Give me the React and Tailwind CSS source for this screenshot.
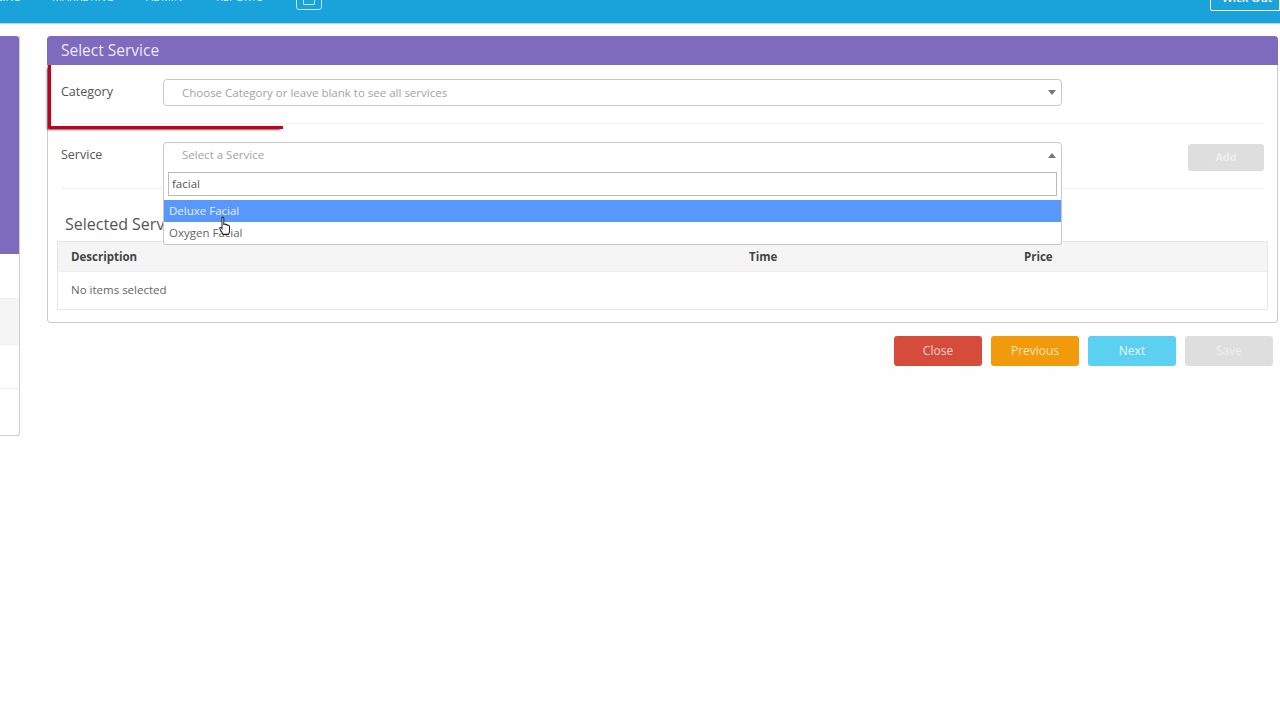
function Arrow({ up }) {
    return (
        <span className={`w-0 h-0 border-x-[4px] border-x-transparent ${up ? "border-b-[5px] border-b-[#777]" : "border-t-[5px] border-t-[#777]"}`}></span>
    )
}

function Select({ text, up, children }) {
    return (
        <div className={`relative h-[27px] w-[899px] border border-[#c8c8c8] bg-white flex items-center justify-between pl-[18px] pr-[5px] ${up ? "rounded-t-[4px]" : "rounded-[4px]"}`}>
            <span className={`text-[11.5px] text-[#a3a3a3] ${up ? "-mt-[1px]" : ""}`}>{text}</span>
            <Arrow up={up} />
            {children}
        </div>
    )
}

function Button({ label, className }) {
    return (
        <button className={`w-[88px] h-[30px] rounded-[3px] text-[12px] font-medium text-center ${className}`}>{label}</button>
    )
}

function Cursor() {
    return (
        <svg className="absolute left-[55px] top-[16px] z-20" width="12" height="20" viewBox="0 0 12 18" preserveAspectRatio="none">
            <path d="M3 1.500c.8-.8 1.800-.4 1.800.6v5.400l.6-.1c.9-.2 1.500.1 1.600.5.8-.3 1.400 0 1.600.5.9-.3 1.900.1 1.900 1.100v4c0 1.300-.4 2.200-1 3H4c-.5-1.300-2.300-3.200-3.200-5-.4-.9.5-1.500 1.200-1l1 1V2.500z" fill="#fff" stroke="#222" strokeWidth="1" />
        </svg>
    )
}

function ServiceDropdown() {
    return (
        <div className="absolute left-[-1px] top-[25px] w-[899px] h-[77px] bg-white border border-[#c8c8c8] border-t-0 rounded-b-[3px] text-[11.5px] z-10">
            <div className="p-[4px]">
                <div className="h-[24px] border border-[#bbb] pl-[3px] flex items-center text-[11.5px] text-[#555]">facial</div>
            </div>
            <div className="relative h-[22px] bg-[#5897fb] text-[#e9f1fe] pl-[5px] flex items-center">
                Deluxe Facial
                <Cursor />
            </div>
            <div className="h-[22px] text-[#666] pl-[5px] flex items-center">Oxygen Facial</div>
        </div>
    )
}

export default function App() {
    return (
        <div className="h-[720px] overflow-hidden bg-[#fefefe] flex flex-col" style={{ fontFamily: '"Open Sans", sans-serif' }}>
            <div className="h-[24px] shrink-0 overflow-hidden bg-[#1aa3db] border-b border-[#a8dcf2] flex justify-between text-white">
                <div className="flex -mt-[11px] text-[11px] font-medium text-[#d5eef8]">
                    <span className="w-[74px] -ml-[22px] pr-[32px] text-right">ONLINE</span>
                    <span className="w-[94px]">MARKETING</span>
                    <span className="w-[70px]">ADMIN</span>
                    <span className="w-[80px]">REPORTS</span>
                    <span className="mt-[1px] w-[26px] h-[20px] border border-[#bfe6f6] rounded-[3px] flex justify-center items-end pb-[4px]">
                        <span className="w-[12px] h-[9px] border border-[#bfe6f6] rounded-[1px]"></span>
                    </span>
                </div>
                <div className="-mt-[10px] w-[70px] h-[21px] border border-white rounded-l-[2px] pl-[11px] pt-[1px] text-[11.5px] leading-[12px] font-semibold">Wick Out</div>
            </div>

            <div className="flex mt-[12px] gap-[27px]">
                <div className="w-[20px] h-[400px] shrink-0 bg-white border-r border-b border-[#cfcfcf] rounded-br-[3px] flex flex-col">
                    <div className="h-[218px] bg-[#7f6bbd] rounded-tr-[3px]"></div>
                    <div className="h-[45px] border-b border-[#eee]"></div>
                    <div className="h-[46px] bg-[#f5f5f5] border-b border-[#eee]"></div>
                    <div className="h-[44px] border-b border-[#eee]"></div>
                </div>

                <div className="w-[1231px] shrink-0">
                    <div className="relative border border-[#cccccc] border-t-0 rounded-[4px] bg-white h-[287px]">
                        <div className="-mx-px h-[29px] bg-[#7f6bbd] rounded-t-[4px] pl-[14px] flex items-center text-[15.5px] font-medium text-[#ece8f6]">Select Service</div>

                        {/* red annotation drawn over the screenshot */}
                        <div className="absolute left-0 top-[29px] w-[235px] h-[64px] border-l-[3px] border-b-[3px] border-[#c4001c] shadow-[-2px_2px_2px_-1px_rgba(0,0,0,0.6)] rounded-bl-[2px]"></div>

                        <div className="mx-[13px] pt-[14px] h-[59px] border-b border-[#f0f0f0] flex">
                            <div className="w-[102px] text-[12.5px] text-[#555] mt-[4px]">Category</div>
                            <Select text="Choose Category or leave blank to see all services" />
                        </div>

                        <div className="mx-[13px] pt-[18px] h-[65px] border-b border-[#f0f0f0] flex">
                            <div className="w-[102px] text-[12.5px] text-[#555] mt-[4px]">Service</div>
                            <Select text="Select a Service" up>
                                <ServiceDropdown />
                            </Select>
                            <div className="ml-auto mt-[2px] w-[76px] h-[27px] rounded-[3px] bg-[#dedede] text-[#f2f2f2] text-[11px] font-semibold flex items-center justify-center">Add</div>
                        </div>

                        <div className="ml-[17px] mt-[23px] text-[16px] leading-[24px] text-[#555]">Selected Services</div>

                        <div className="mx-[9px] mt-[5px] border border-[#e6e6e6]">
                            <div className="h-[30px] bg-[#f5f5f5] border-b border-[#eee] flex items-center text-[11.5px] font-bold text-[#444]">
                                <span className="ml-[13px] w-[678px]">Description</span>
                                <span className="w-[275px]">Time</span>
                                <span>Price</span>
                            </div>
                            <div className="h-[37px] pl-[13px] pb-[2px] flex items-center text-[11.5px] text-[#666]">No items selected</div>
                        </div>
                    </div>

                    <div className="flex justify-end gap-[9px] mt-[13px] pr-[5px]">
                        <Button label="Close" className="bg-[#d64c3b] text-[#f6d3cd]" />
                        <Button label="Previous" className="bg-[#f09a0c] text-[#fce5bd]" />
                        <Button label="Next" className="bg-[#5bd0f0] text-[#e4f7fc]" />
                        <Button label="Save" className="bg-[#dedede] text-[#f0f0f0]" />
                    </div>
                </div>
            </div>
        </div>
    )
}
